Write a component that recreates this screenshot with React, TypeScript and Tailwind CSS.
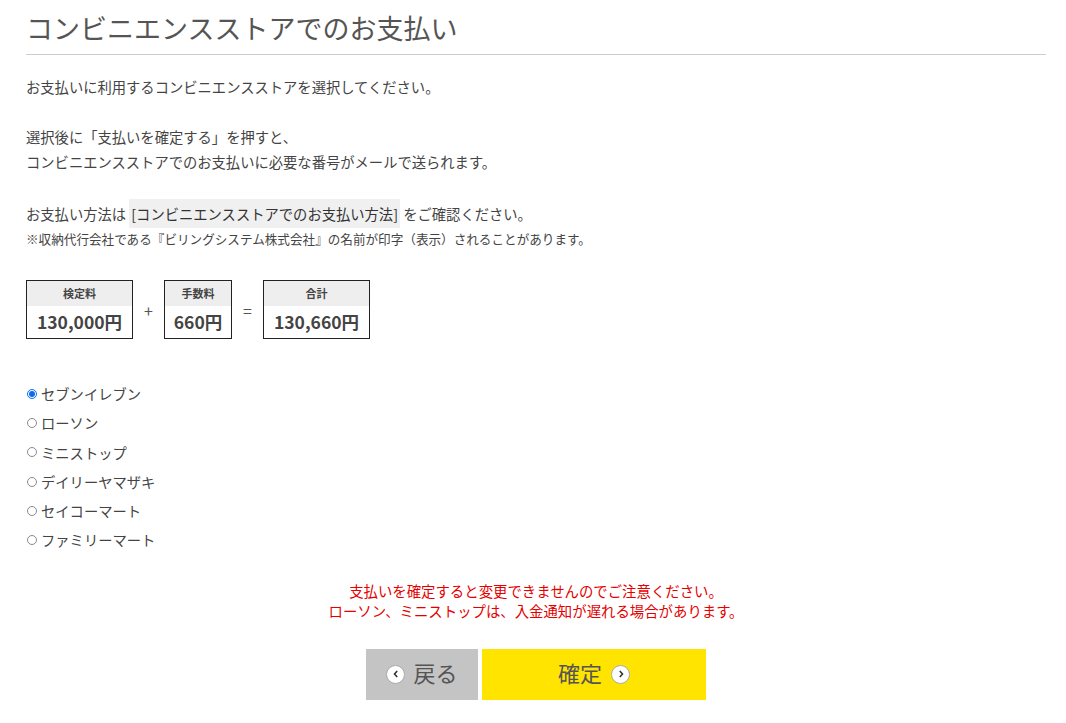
import { useState } from "react";

const stores = [
  "セブンイレブン",
  "ローソン",
  "ミニストップ",
  "デイリーヤマザキ",
  "セイコーマート",
  "ファミリーマート",
];

const Circle = ({ dir }: { dir: "left" | "right" }) => (
  <span className="inline-flex items-center justify-center w-[19px] h-[19px] rounded-full bg-white border border-[#aaa]">
    <svg width="10" height="10" viewBox="0 0 10 10">
      {dir === "left" ? (
        <path d="M6.2 2 L3.5 5 L6.2 8" fill="none" stroke="#333" strokeWidth="1.6" />
      ) : (
        <path d="M3.8 2 L6.5 5 L3.8 8" fill="none" stroke="#333" strokeWidth="1.6" />
      )}
    </svg>
  </span>
);

const FeeBox = ({ label, value, w }: { label: string; value: string; w: string }) => (
  <div className={`border border-[#222] ${w} h-[59px] flex flex-col`}>
    <div className="h-[25px] bg-[#eeeeee] text-[11px] font-bold text-[#444] flex items-center justify-center">
      {label}
    </div>
    <div className="flex-1 text-[17.5px] font-bold text-[#444] flex items-center justify-center">
      {value}
    </div>
  </div>
);

const App = () => {
  const [selected, setSelected] = useState(0);

  return (
    <div
      className="px-[26px] bg-white min-h-[723px] text-[#444]"
      style={{ fontFamily: '"Noto Sans CJK JP", "Noto Sans", sans-serif' }}
    >
      <div className="w-[1020px]">
        <h1 className="pt-[8px] pb-[6px] border-b border-[#cccccc] text-[27px] leading-[40px] text-[#555] font-normal">
          コンビニエンスストアでのお支払い
        </h1>

        <p className="mt-[19px] text-[14.3px] leading-[25px]">
          お支払いに利用するコンビニエンスストアを選択してください。
        </p>

        <p className="mt-[25px] text-[14.3px] leading-[25px]">
          選択後に「支払いを確定する」を押すと、
          <br />
          コンビニエンスストアでのお支払いに必要な番号がメールで送られます。
        </p>

        <p className="mt-[27px] text-[14.3px] leading-[26px]">
          お支払い方法は{" "}
          <span className="bg-[#f0f0f0] py-[4px] px-[2px] text-[#333]">
            [コンビニエンスストアでのお支払い方法]
          </span>{" "}
          をご確認ください。
        </p>
        <p className="text-[12.6px] leading-[24px]">
          ※収納代行会社である『ビリングシステム株式会社』の名前が印字（表示）されることがあります。
        </p>

        <div className="mt-[29px] flex items-center">
          <FeeBox label="検定料" value="130,000円" w="w-[107px]" />
          <div className="w-[31px] text-center text-[16px] text-[#555]">+</div>
          <FeeBox label="手数料" value="660円" w="w-[68px]" />
          <div className="w-[31px] text-center text-[16px] text-[#555]">=</div>
          <FeeBox label="合計" value="130,660円" w="w-[107px]" />
        </div>

        <ul className="mt-[40px]">
          {stores.map((s, i) => (
            <li
              key={s}
              className="flex items-center h-[29.3px] text-[14.3px] cursor-pointer"
              onClick={() => setSelected(i)}
            >
              {selected === i ? (
                <span className="ml-[1px] w-[10px] h-[10px] rounded-full border border-[#0a6cf0] flex items-center justify-center">
                  <span className="w-[6px] h-[6px] rounded-full bg-[#0a6cf0]" />
                </span>
              ) : (
                <span className="ml-[1px] w-[10px] h-[10px] rounded-full border border-[#8a8a8a]" />
              )}
              <span className="ml-[4px]">{s}</span>
            </li>
          ))}
        </ul>

        <div className="mt-[26px] text-center text-[14.4px] leading-[20px] text-[#e50000]">
          <p>支払いを確定すると変更できませんのでご注意ください。</p>
          <p>ローソン、ミニストップは、入金通知が遅れる場合があります。</p>
        </div>

        <div className="mt-[28px] flex justify-center gap-[4px]">
          <button className="w-[112px] h-[51px] pb-[3px] bg-[#c4c4c4] flex items-center justify-center gap-[8px] text-[22px] text-[#555]">
            <span className="mt-[3px] flex">
              <Circle dir="left" />
            </span>
            戻る
          </button>
          <button className="w-[224px] h-[51px] pb-[3px] bg-[#ffe400] flex items-center justify-center gap-[9px] text-[22px] text-[#555]">
            確定
            <span className="mt-[3px] flex">
              <Circle dir="right" />
            </span>
          </button>
        </div>
      </div>
    </div>
  );
};

export default App;
